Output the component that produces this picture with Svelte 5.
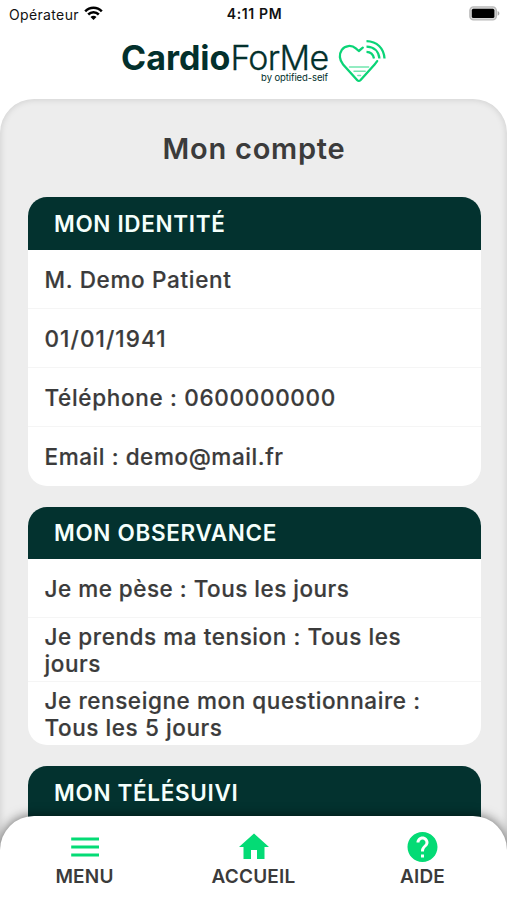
<script>
  const cards = [
    {
      title: 'MON IDENTITÉ', titleSpacing: 0.66,
      rows: [
        { text: 'M. Demo Patient', spacing: 0.67 },
        { text: '01/01/1941', spacing: 1.08 },
        { text: 'Téléphone : 0600000000', spacing: 0.68 },
        { text: 'Email : demo@mail.fr', spacing: 0.58 }
      ]
    },
    {
      title: 'MON OBSERVANCE', titleSpacing: 0.66,
      rows: [
        { text: 'Je me pèse : Tous les jours', spacing: 0.5 },
        { text: 'Je prends ma tension : Tous les jours', spacing: 0.57, tall: true },
        { text: 'Je renseigne mon questionnaire : Tous les 5 jours', spacing: 0.58, tall: true }
      ]
    },
    { title: 'MON TÉLÉSUIVI', titleSpacing: 0.68, rows: [{ text: '', spacing: 0 }] }
  ];
</script>

<div class="screen">
  <div class="status">
    <div class="carrier">
      <span>Opérateur</span>
      <svg width="19" height="15" viewBox="0 0 19 15" fill="none" stroke="#000" stroke-width="2.5">
        <path d="M1.2 5.3C5.8.6 13.2.6 17.8 5.3" />
        <path d="M4.2 8.5c3-3 7.600-3 10.600 0" />
        <path d="M9.500 14l-3-3.100c1.700-1.500 4.300-1.500 6 0z" fill="#000" stroke="none" />
      </svg>
    </div>
    <div class="time">4:11 PM</div>
    <svg class="battery" width="31" height="15" viewBox="0 0 31 15">
      <rect x=".9" y=".9" width="26.400" height="13" rx="3.600" fill="#d8d8d8" stroke="#b9b9b9" stroke-width="1.400" />
      <rect x="2.800" y="2.800" width="22.600" height="9.200" rx="1.600" fill="#000" />
      <path d="M28.600 4.900c2.400 1 2.400 3.800 0 4.800z" fill="#a8a8a8" />
    </svg>
  </div>

  <header>
    <div class="wordmark">
      <div class="name"><b>Cardio</b><span>ForMe</span></div>
      <div class="by">by optified-self</div>
    </div>
    <svg class="heart" width="50" height="46" viewBox="0 0 50 46" fill="none" stroke="#0bd477" stroke-width="2.300" stroke-linecap="round" stroke-linejoin="round">
      <path d="M24.800 9.700l-4 3.300-3-2.600C13.600 6.700 7 7.300 3.800 11.800c-3 4.400-2.500 10.300 1.300 14.600l14.200 15.800c1 1 2.100 1 3.100 0L36.600 26.500c1.200-1.300 2-2.200 2.600-3.400" />
      <g stroke-linecap="butt" stroke-width="2.300">
        <path d="M28.500 13.900c4 .1 6.700 2.300 7.500 6.600" />
        <path d="M28.500 8.600c7.300.2 12.200 4.600 12.900 11.900" />
        <path d="M28.500 3.200C38.900 3.500 45.800 9.900 46.500 20.500" />
      </g>
      <path d="M11.500 29h19.200M16 33.200h11.200M19.800 37.500h2.800" stroke="#72e6af" stroke-width="1.400" />
    </svg>
  </header>

  <main>
    <h1>Mon compte</h1>
    {#each cards as card}
      <section>
        <h2 style="letter-spacing:{card.titleSpacing}px">{card.title}</h2>
        {#each card.rows as row}
          <div class="row" class:tall={row.tall}><p style="letter-spacing:{row.spacing}px">{row.text}</p></div>
        {/each}
      </section>
    {/each}
  </main>

  <nav>
    <div class="tab">
      <svg width="36" height="36" viewBox="0 0 36 36" fill="#04db75"><path d="M4.200 8.500h27.800v3H4.200zM4.200 16.500h27.800v3H4.200zM4.200 24.500h27.800v3H4.200z" /></svg>
      <span>MENU</span>
    </div>
    <div class="tab">
      <svg width="36" height="36" viewBox="0 0 24 24" fill="#04db75"><path d="M10 20v-6h4v6h5v-8h3L12 3 2 12h3v8z" /></svg>
      <span>ACCUEIL</span>
    </div>
    <div class="tab">
      <svg width="37" height="37" viewBox="0 0 24 24" fill="#04db75"><path d="M12 2C6.480 2 2 6.480 2 12s4.480 10 10 10 10-4.480 10-10S17.520 2 12 2zm1 17h-2v-2h2v2zm2.070-7.750l-.9.920C13.450 12.900 13 13.500 13 15h-2v-.5c0-1.100.450-2.100 1.170-2.830l1.240-1.260c.370-.360.590-.860.590-1.410 0-1.100-.9-2-2-2s-2 .9-2 2H8c0-2.210 1.790-4 4-4s4 1.790 4 4c0 .880-.360 1.680-.930 2.250z" /></svg>
      <span>AIDE</span>
    </div>
  </nav>
</div>

<style>
  :global(body) { margin: 0; background: #fff; }
  .screen {
    width: 507px; height: 900px; overflow: hidden; position: relative;
    display: flex; flex-direction: column; background: #fff;
    color: #3b3b3b; font-family: Inter, "Liberation Sans", sans-serif;
  }
  .status {
    height: 28px; flex: none; box-sizing: border-box; padding: 0 7px 0 9px;
    display: grid; grid-template-columns: 1fr auto 1fr; align-items: center;
    font-size: 14px; color: #111;
  }
  .carrier { display: flex; align-items: center; gap: 5px; letter-spacing: 0.35px; }
  .carrier svg { margin-top: -2px; }
  .time { font-weight: 600; font-size: 14px; letter-spacing: 0.6px; margin-top: -1px; }
  .battery { justify-self: end; margin-top: -2px; }
  header { height: 71px; flex: none; display: flex; padding-left: 121px; color: #03302c; }
  .wordmark { width: 207px; padding-top: 13px; white-space: nowrap; }
  .name { font-size: 34px; line-height: 34px; }
  .name b { font-weight: 700; }
  .name span { font-weight: 300; letter-spacing: -0.75px; -webkit-text-stroke: 0.3px #03302c; }
  .by { font-size: 9.500px; line-height: 10px; text-align: right; letter-spacing: -0.1px; margin-top: -2px; }
  .heart { margin: 10px 0 0 10px; }
  main {
    flex: 1; min-height: 0; overflow: hidden; box-sizing: border-box;
    padding: 0 26.500px 0 27.500px; border-radius: 34px 34px 0 0; background: #ededed;
    box-shadow: inset 0 0 7px rgba(0, 0, 0, 0.15);
  }
  h1 {
    height: 98px; box-sizing: border-box; padding-top: 32px; margin: 0; text-align: center;
    font-size: 29px; line-height: 36px; font-weight: 600; letter-spacing: 0.75px;
  }
  section { background: #fff; border-radius: 19px; overflow: hidden; margin-bottom: 20.500px; }
  h2 {
    height: 53px; line-height: 53px; margin: 0; padding-left: 26.500px; background: #03322f;
    color: #f5fffc; font-size: 22.500px; font-weight: 600;
  }
  section:nth-of-type(2) h2 { height: 52.500px; line-height: 52px; }
  .row {
    height: 59px; box-sizing: border-box; padding: 0 17px; display: flex; align-items: center;
    font-size: 22.500px; line-height: 27px; font-weight: 500; border-bottom: 1.500px solid #f5f5f5;
    -webkit-text-stroke: 0.2px #3b3b3b;
  }
  .row:last-child { border-bottom-color: transparent; }
  .row.tall { height: 63.500px; }
  section:nth-of-type(2) p { margin-top: 1.500px; }
  p { margin: 0; }
  nav {
    position: absolute; left: 0; right: 0; bottom: 0; height: 84px; background: #fff;
    border-radius: 34px 34px 0 0; box-shadow: 0 0 12px rgba(0, 0, 0, 0.6);
    display: grid; grid-template-columns: repeat(3, 1fr);
  }
  .tab { display: flex; flex-direction: column; align-items: center; padding-top: 13px; }
  .tab svg { height: 36px; }
  .tab span { font-size: 19px; line-height: 24px; font-weight: 600; letter-spacing: 0.2px; }
</style>
